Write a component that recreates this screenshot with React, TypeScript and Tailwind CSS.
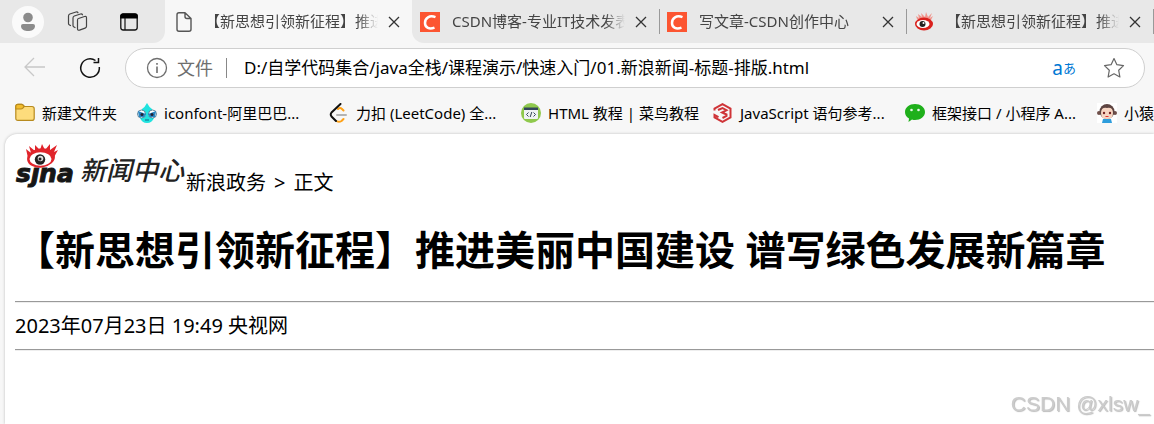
import { useState } from 'react'
import type { ReactNode } from 'react'

const tabs = [
  { title: '【新思想引领新征程】推进', icon: <FileIcon /> },
  { title: 'CSDN博客-专业IT技术发表', icon: <CsdnIcon /> },
  { title: '写文章-CSDN创作中心', icon: <CsdnIcon /> },
  { title: '【新思想引领新征程】推进', icon: <WeiboIcon /> },
]

const bookmarks = [
  { label: 'iconfont-阿里巴巴...', icon: <IconfontIcon /> },
  { label: '力扣 (LeetCode) 全...', icon: <LeetCodeIcon /> },
  { label: 'HTML 教程 | 菜鸟教程', icon: <RunoobIcon /> },
  { label: 'JavaScript 语句参考...', icon: <ScriptIcon /> },
  { label: '框架接口 / 小程序 A...', icon: <WechatIcon /> },
  { label: '小猿', icon: <MonkeyIcon /> },
]

export default function App() {
  const [active, setActive] = useState(0)
  const [url, setUrl] = useState('D:/自学代码集合/java全栈/课程演示/快速入门/01.新浪新闻-标题-排版.html')

  return (
    <div className="flex min-h-screen flex-col overflow-hidden bg-[#f7f7f7] font-['Noto_Sans','Noto_Sans_CJK_SC',sans-serif] text-black">
      <header>
        <div className="flex h-[43px] bg-[#f7f7f7]">
          <div className={`flex w-[165px] shrink-0 items-center bg-[#e8e8e8] pl-3 ${active === 0 ? 'rounded-br-xl' : ''}`}>
            <button aria-label="个人资料" className="flex size-8 items-center justify-center rounded-full bg-[#fafafa]">
              <svg viewBox="0 0 32 32" className="size-8" fill="#8b8b8b">
                <circle cx="16" cy="11.500" r="4.800" />
                <path d="M11 18h10q2 0 2 2c0 4-4 5-7 5s-7-1-7-5q0-2 2-2z" />
              </svg>
            </button>
            <button aria-label="工作区" className="ml-[21px]">
              <svg viewBox="0 0 24 24" className="size-6" fill="none" stroke="#444" strokeWidth="1.200" strokeLinejoin="round" strokeLinecap="round">
                <path d="M13.500 8.500l6-2q2-.6 2 1.200v8.500q0 1.400-1.400 1.900l-5.600 2q-2 .6-2-1.400V10q0-1.200 1-1.500z" />
                <path d="M10 17.500l-1-.5q-1-.5-1-1.500V8q0-1.500 1.300-2l6.200-2q1.500-.4 2 .8" />
                <path d="M5.500 15.500l-1-.5q-1-.5-1-1.500V6q0-1.500 1.300-2L11 2q1.500-.4 2 .8" />
              </svg>
            </button>
            <button aria-label="标签页操作菜单" className="ml-[30px]">
              <svg viewBox="0 0 20 20" className="size-5">
                <rect x="1.800" y="2" width="16.400" height="16" rx="2.500" fill="none" stroke="#111" strokeWidth="1.300" />
                <path d="M1.200 6.500V4q0-2.500 2.500-2.500h12.600q2.500 0 2.500 2.500v2.500z" fill="#000" />
                <path d="M6 6v12" stroke="#111" strokeWidth="1.200" />
              </svg>
            </button>
          </div>
          <div className="flex min-w-0 flex-1">
            {tabs.map((tab, i) => (
              <div key={i} className="min-w-0 flex-1 bg-[#e8e8e8] first:bg-[#f7f7f7] nth-2:rounded-bl-xl">
                <div
                  className={`flex h-full items-center pr-2.5 pl-2 ${i === active ? 'rounded-t-xl bg-[#f7f7f7]' : ''} ${
                    i > active + 1
                      ? 'bg-[linear-gradient(#999,#999)] bg-[length:1px_25px] bg-[position:0_9px] bg-no-repeat'
                      : ''
                  }`}
                >
                  <button onClick={() => setActive(i)} className="flex min-w-0 flex-1 items-center gap-2.5 text-left">
                    <span className="size-[22px] shrink-0">{tab.icon}</span>
                    <span className="min-w-0 flex-1 overflow-hidden pb-0.5 text-[15px] leading-6 whitespace-nowrap text-[#444] [mask-image:linear-gradient(to_right,#000_calc(100%-20px),transparent)]">
                      {tab.title}
                    </span>
                  </button>
                  <button aria-label="关闭标签页" className="ml-2 flex size-4 shrink-0 items-center justify-center">
                    <svg viewBox="0 0 12 12" className="size-3" stroke="#333" strokeWidth="1.300">
                      <path d="M1 1l10 10M11 1L1 11" />
                    </svg>
                  </button>
                </div>
              </div>
            ))}
            <div className="flex bg-[#e8e8e8] py-[9px]">
              <span className="w-px bg-[#999]" />
            </div>
          </div>
        </div>

        <div className="flex h-[50px] items-center pr-[9px] pl-[23px]">
          <button aria-label="后退">
            <svg viewBox="0 0 24 24" className="size-6" fill="none" stroke="#c8c8c8" strokeWidth="1.300">
              <path d="M22 11H2.500M11 2L2 11l9 9" />
            </svg>
          </button>
          <button aria-label="刷新" className="ml-[31px]">
            <svg viewBox="0 0 24 24" className="size-6" fill="none" stroke="#111" strokeWidth="1.500">
              <path d="M17.500 4.500A9.300 9.300 0 1 0 21.300 11M20.500 2v4.500H15.500" />
            </svg>
          </button>
          <div className="ml-[23px] flex h-10 flex-1 items-center rounded-full border border-[#cfcfcf] bg-white pr-[18px] pl-5">
            <svg viewBox="0 0 22 22" className="size-[22px]" fill="none" stroke="#6e6e6e" strokeWidth="1.300">
              <circle cx="11" cy="11" r="9.500" />
              <path d="M11 9.500V16M11 6v1.800" strokeWidth="1.600" />
            </svg>
            <label htmlFor="url" className="ml-[9px] text-lg text-[#6e6e6e]">文件</label>
            <span className="mr-3 ml-[13px] h-5 w-px bg-[#888]" />
            <input
              id="url"
              value={url}
              onChange={(e) => setUrl(e.target.value)}
              className="min-w-0 flex-1 bg-transparent pl-[5px] text-[17px] outline-none"
            />
            <button aria-label="翻译" className="text-[#0078d4]">
              <span className="flex items-center leading-6">
                <span className="text-[19px]">a</span>
                <span className="text-[13px]">あ</span>
              </span>
            </button>
            <button aria-label="收藏" className="ml-[26px]">
              <svg viewBox="0 0 24 24" className="size-6" fill="none" stroke="#666" strokeWidth="1.200" strokeLinejoin="round">
                <path d="M12 2.500l2.900 6.200 6.600.9-4.800 4.700 1.200 6.700L12 17.800 6.100 21l1.200-6.700L2.500 9.600l6.600-.9z" />
              </svg>
            </button>
          </div>
        </div>

        <nav className="flex h-10 items-center gap-5 overflow-hidden pl-[15px] text-[15px] whitespace-nowrap">
          <Bookmark icon={<FolderIcon />} label="新建文件夹" />
          {bookmarks.map((item) => (
            <div key={item.label} className="w-[172px] shrink-0">
              <Bookmark icon={item.icon} label={item.label} />
            </div>
          ))}
        </nav>
      </header>

      <main className="mt-px ml-[5px] flex-1 rounded-tl-xl bg-white pt-2.5 pl-[10px] shadow-[0_0_3px_#bbb]">
        <div className="flex items-start">
          <SinaLogo />
          <p className="pt-6 text-xl leading-[30px]">
            <a href="#politics">新浪政务</a>
            <span className="mx-2">&gt;</span>
            正文
          </p>
        </div>
        <h1 className="mt-[25px] text-[40px] leading-[53px] font-bold whitespace-nowrap">
          【新思想引领新征程】推进美丽中国建设 谱写绿色发展新篇章
        </h1>
        <hr className="mt-[25px] border-t border-b border-t-[#999] border-b-[#eee]" />
        <p className="my-[10px] text-xl leading-[26px]">2023年07月23日 19:49 央视网</p>
        <hr className="border-t border-b border-t-[#999] border-b-[#eee]" />
      </main>

      <div className="fixed right-1 bottom-1 font-['Liberation_Sans',sans-serif] text-[21px] leading-8 text-[#ccc] [text-shadow:1px_1px_1px_#bbb]">
        CSDN @xlsw_
      </div>
    </div>
  )
}

function Bookmark({ icon, label }: { icon: ReactNode; label: string }) {
  return (
    <a href="#bookmark" className="flex shrink-0 items-center gap-[7px]">
      <span className="size-5 shrink-0">{icon}</span>
      {label}
    </a>
  )
}

function SinaLogo() {
  return (
    <svg viewBox="0 0 171 50" className="h-[50px] w-[171px] shrink-0 overflow-visible" role="img" aria-label="新浪新闻中心">
      <g className="font-['DejaVu_Sans',sans-serif] font-bold italic" fill="#161616" stroke="#161616" strokeWidth="1" fontSize="25">
        <text x="1" y="38">s</text>
        <text x="16" y="38">ȷ</text>
        <text x="24" y="38">n</text>
        <text x="42" y="38">a</text>
      </g>
      <g fill="#e0242b">
        <path d="M13 14L11 5l5 4-2-7 6 5V1l5 5 2-6 3 6 5-6v6l7-5-3 7 4-2-5 9-8-4-9 1z" />
        <ellipse cx="26" cy="14" rx="14" ry="9.500" transform="rotate(-8 26 14)" />
      </g>
      <ellipse cx="25.500" cy="15" rx="11" ry="6.800" fill="#fff" />
      <circle cx="25" cy="15.500" r="5.200" fill="#222" />
      <circle cx="25.500" cy="14.500" r="2.800" fill="#ddd" />
      <circle cx="25" cy="15" r="1.500" fill="#222" />
      <text x="65" y="36" fontSize="26" fill="#222" className="font-['Noto_Sans_CJK_SC',sans-serif] font-medium italic">
        新闻中心
      </text>
    </svg>
  )
}

function FileIcon() {
  return (
    <svg viewBox="0 0 22 22" fill="none" stroke="#555" strokeWidth="1.400" strokeLinejoin="round">
      <path d="M12 1.700H6q-2 0-2 2v14.600q0 2 2 2h10q2 0 2-2V7.500zM12 1.700v3.800q0 2 2 2h4" />
    </svg>
  )
}

function CsdnIcon() {
  return (
    <svg viewBox="0 0 22 22">
      <path d="M0 1h20v20H0z" fill="#fc5531" />
      <path d="M15.500 6.200C9.500 3.800 5 7 5 12c0 5 4.500 6.500 9.500 4.600" fill="none" stroke="#fff" strokeWidth="2.500" />
    </svg>
  )
}

function WeiboIcon() {
  return (
    <svg viewBox="0 0 22 22">
      <path d="M3 8L2 5l3 2-1-4 4 3-1-4 4 4 1-5 2 5 4-4-2 5 3-2-2 4z" fill="#f0958d" />
      <ellipse cx="10" cy="13" rx="9" ry="6.500" fill="#d9201c" />
      <ellipse cx="9" cy="13" rx="6.500" ry="4" fill="#fff" />
      <circle cx="8.500" cy="13" r="3" fill="#222" />
      <circle cx="9.500" cy="12" r="1" fill="#fff" />
    </svg>
  )
}

function FolderIcon() {
  return (
    <svg viewBox="0 0 20 20" stroke="#b78a1e" strokeWidth="1.200">
      <path d="M.8 6V3.500q0-2.200 2.200-2.200h3.500q1 0 1.800 1l1 1.200H17q2.200 0 2.200 2.200v9.500q0 2.200-2.200 2.200H3Q.8 17.400.8 15.200z" fill="#fddc7c" />
      <path d="M.8 6V3.500q0-2.200 2.200-2.200h3.500q1 0 1.800 1l1 1.200-1.500 1.700q-.8.8-2 .8z" fill="#f3bd2d" />
    </svg>
  )
}

function IconfontIcon() {
  return (
    <svg viewBox="0 0 20 20">
      <path d="M10 0q2 4 5 6l2 9q-2 5-7 5t-7-5l2-9q3-2 5-6z" fill="#20e3df" />
      <g fill="#fff" stroke="#3e6a85" strokeWidth=".8">
        <circle cx="4.500" cy="11" r="4" />
        <circle cx="15.500" cy="11" r="4" />
      </g>
      <path d="M1 8l8 3-2 3H2zM19 8l-8 3 2 3h5z" fill="#2886c5" />
      <circle cx="5" cy="11.500" r="1.500" fill="#223" />
      <circle cx="15" cy="11.500" r="1.500" fill="#223" />
      <path d="M8 17h4" stroke="#168" />
    </svg>
  )
}

function LeetCodeIcon() {
  return (
    <svg viewBox="0 0 20 20" fill="none" strokeWidth="2" strokeLinecap="round" strokeLinejoin="round">
      <path d="M9 6q2-2 4 0l1.500 1.500M14.500 16l-2 2q-2.500 1.500-5 0" stroke="#ffa116" />
      <path d="M11.500 1L2.500 9.500q-1.500 2 0 4L7 18" stroke="#111" />
      <path d="M8 12h9" stroke="#b3b3b3" />
    </svg>
  )
}

function RunoobIcon() {
  return (
    <svg viewBox="0 0 20 20">
      <circle cx="10" cy="10" r="10" fill="#8fc94d" />
      <rect x="3" y="5" width="14" height="11" rx="1" fill="#f0f3f4" />
      <path d="M3 4.500h14V7H3z" fill="#33475b" />
      <path d="M7.500 9.500L5.500 11.500l2 2M12.500 9.500l2 2-2 2M10.800 9l-1.600 5" fill="none" stroke="#33475b" />
    </svg>
  )
}

function ScriptIcon() {
  return (
    <svg viewBox="0 0 20 20" fill="none" stroke="#cf3438" strokeWidth="2">
      <path d="M1.500 7.500V5.500L9.500 1.200l8 4.300v9l-8 4.300-8-4.300V12l4 2.200" />
      <path d="M5 7l4.500-2 4 2.300L9 9.500l4.500 2v1.500l-4 2" />
    </svg>
  )
}

function WechatIcon() {
  return (
    <svg viewBox="0 0 20 20">
      <path d="M10 1c5.500 0 10 3.500 10 8s-4.500 8-10 8q-1.500 0-3-.5L3.500 19l.5-3.500Q0 13 0 9c0-4.500 4.500-8 10-8z" fill="#1fb01b" />
      <circle cx="6.500" cy="7" r="1.300" fill="#e8f7e8" />
      <circle cx="13.500" cy="7" r="1.300" fill="#e8f7e8" />
    </svg>
  )
}

function MonkeyIcon() {
  return (
    <svg viewBox="0 0 20 20">
      <path d="M0 0h20v20H0z" fill="#fff" />
      <circle cx="2" cy="10" r="2" fill="#70504b" />
      <circle cx="18" cy="10" r="2" fill="#70504b" />
      <path d="M6 16h8l1 4H5z" fill="#2e9ddc" />
      <ellipse cx="10" cy="8.500" rx="7.500" ry="7.500" fill="#5d4441" />
      <path d="M10 5q6-1 6 5t-6 6-6-6 6-5z" fill="#f7d5c2" />
      <circle cx="7" cy="10" r="1.200" fill="#722" />
      <circle cx="13" cy="10" r="1.200" fill="#722" />
      <path d="M8.500 13.500h3" stroke="#d33" />
    </svg>
  )
}
